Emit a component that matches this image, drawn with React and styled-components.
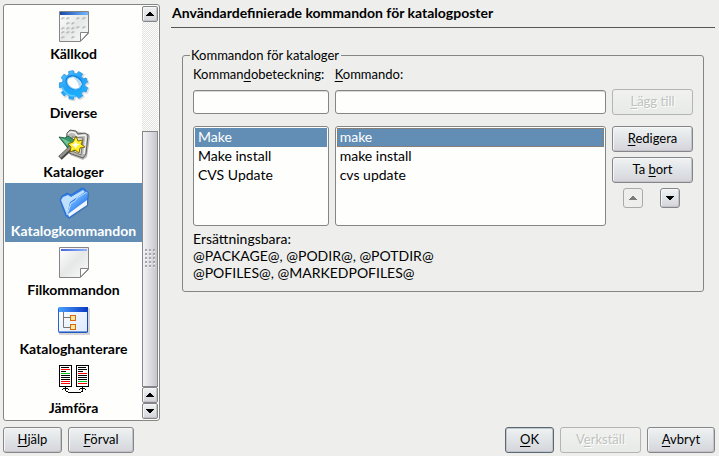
import React, { useState } from "react";
import styled, { createGlobalStyle, css } from "styled-components";

const c = {
  page: "#eeefed",
  line: "#848683",
  select: "#628eb5",
  white: "#fefefd",
};

const GlobalStyle = createGlobalStyle`
  * { box-sizing: border-box; }
  body { margin: 0; background: ${c.page}; color: #000; }
  body, button, input { font-family: Lato, "Noto Sans", sans-serif; font-size: 13px; line-height: 17px; }
  u { text-decoration: underline; text-underline-offset: 2px; text-decoration-skip-ink: none; }
`;

const Dialog = styled.div`
  min-height: 100vh;
  padding: 4px 4px 4px 3px;
  display: flex;
  flex-direction: column;
  gap: 6px;
`;

const Body = styled.div`
  flex: 1;
  display: flex;
  gap: 11px;
`;

const Sidebar = styled.aside`
  flex: 0 0 157px;
  display: flex;
  border: 1px solid ${c.line};
  border-radius: 3px;
  padding: 1px;
  background: ${c.white};
`;

const PageList = styled.nav`
  flex: 1;
  min-width: 0;
`;

const PageButton = styled.button`
  width: 100%;
  height: 59px;
  display: flex;
  flex-direction: column;
  align-items: center;
  gap: 3px;
  padding: 4px 0 2px;
  border: 0;
  font-size: 14px;
  font-weight: 700;
  color: ${(p) => (p.$active ? "#fff" : "#000")};
  background: ${(p) => (p.$active ? c.select : "transparent")};
`;

const ScrollBar = styled.div`
  flex: 0 0 16px;
  display: flex;
  flex-direction: column;
`;

const raised = css`
  border: 1px solid #85868a;
  background: linear-gradient(#f0f2f2, #dfe3e6 55%, #d6d3da);
  box-shadow: inset 1px 1px #f5f6f6, inset -1px -1px #c4c3c9;
`;

const ScrollButton = styled.button`
  ${raised}
  flex: 0 0 16px;
  display: grid;
  place-items: center;
  padding: 0;
  border-radius: 2px;
`;

const Track = styled.div`
  flex: 3 0 0;
  background: conic-gradient(#e3e4e2 25%, #fefefd 0 50%, #e3e4e2 0 75%, #fefefd 0) 0 0 / 2px 2px;
`;

const Thumb = styled.div`
  flex: 7 0 0;
  display: grid;
  place-items: center;
  border: 1px solid #85868a;
  background: linear-gradient(90deg, #f3f3f5, #dddde2 50%, #c8c5cd);
`;

const Main = styled.main`
  flex: 1;
  min-width: 0;
`;

const Title = styled.h1`
  margin: 0;
  padding: 0 0 5px 1px;
  border-bottom: 1px solid #555754;
  font-size: 14px;
  line-height: 18px;
  font-weight: 700;
`;

const Group = styled.fieldset`
  margin: 18px 11px 0;
  padding: 2px 10px 10px;
  border: 1px solid ${c.line};
  border-radius: 3px;
  min-width: 0;
`;

const Legend = styled.legend`
  margin-left: -3px;
  padding: 0 2px 0 1px;
  line-height: 18px;
`;

const Columns = styled.div`
  display: grid;
  grid-template-columns: minmax(0, 1fr) minmax(0, 2fr) 81px;
  column-gap: 6px;
  align-items: ${(p) => p.$align || "stretch"};
  margin-bottom: ${(p) => p.$after || 0}px;
`;

const Label = styled.label`
  white-space: nowrap;
`;

const TextBox = styled.input`
  width: 100%;
  height: 24px;
  padding: 0 5px;
  border: 1px solid ${c.line};
  border-radius: 3px;
  background: ${c.white};
  box-shadow: inset 0 1px #d8d9d7;
`;

const ListBox = styled.ul`
  height: 100px;
  margin: 0;
  padding: 1px;
  list-style: none;
  border: 1px solid ${c.line};
  border-radius: 3px;
  background: ${c.white};
  font-size: 14px;
`;

const Option = styled.li`
  height: 19px;
  padding: 0 3px;
  line-height: 17px;
  color: ${(p) => (p.$active ? "#fff" : "#000")};
  background: ${(p) => (p.$active ? c.select : "transparent")};
  outline: ${(p) => (p.$focused ? "1px dotted #a8733f" : "none")};
  outline-offset: -1px;
`;

const PushButton = styled.button`
  ${raised}
  height: 26px;
  width: ${(p) => (p.$width ? `${p.$width}px` : "100%")};
  padding: 0 0 2px;
  border-radius: 3px;
  color: #000;
  ${(p) => p.$default && css`border-color: #5f676e; box-shadow: inset 0 0 0 1px #bcc7d0;`}
  &:disabled {
    border-color: #b3b5b2;
    background: linear-gradient(#f1f2f0, #e8eae7);
    box-shadow: none;
    color: #c0c2bf;
    text-shadow: 1px 1px #fff;
  }
`;

const Actions = styled.div`
  display: flex;
  flex-direction: column;
  gap: 5px;
`;

const MoveRow = styled.div`
  display: flex;
  justify-content: space-between;
  padding: 0 13px 0 11px;
`;

const MoveButton = styled.button`
  ${raised}
  width: 20px;
  height: 20px;
  display: grid;
  place-items: center;
  padding: 0;
  border-radius: 3px;
  color: #000;
  &:disabled {
    border-color: #a9aba8;
    background: #eeefed;
    box-shadow: none;
    color: #7b7d7a;
  }
`;

const Variables = styled.p`
  margin: 0;
  font-size: 14px;
`;

const Footer = styled.footer`
  display: flex;
  justify-content: space-between;
`;

const ButtonRow = styled.div`
  display: flex;
  gap: 6px;
`;

function Arrow({ down }) {
  return (
    <svg width="8" height="4" viewBox="0 0 8 4" shapeRendering="crispEdges" aria-hidden="true">
      <path fill="currentColor" d={down ? "M0 0h8v1H7v1H6v1H5v1H3V3H2V2H1V1H0z" : "M3 0h2v1h1v1h1v1h1v1H0V3h1V2h1V1h1z"} />
    </svg>
  );
}

function Grip() {
  const dots = [];
  for (let y = 0; y < 5; y++) for (let x = 0; x < 3; x++) dots.push([x * 4, y * 4]);
  return (
    <svg width="11" height="19" viewBox="0 0 11 19" shapeRendering="crispEdges" aria-hidden="true">
      {dots.map(([x, y]) => (
        <g key={`${x}-${y}`}>
          <rect x={x} y={y} width="2" height="2" fill="#a5a5ae" />
          <path d={`M${x + 2} ${y + 1}v2h-1v-1h1z`} fill="#fff" />
        </g>
      ))}
    </svg>
  );
}

function Sheet({ marks }) {
  return (
    <>
      <defs>
        <linearGradient id={marks ? "sheetA" : "sheetB"} x2="1" y2="1">
          <stop stopColor="#fff" /><stop offset=".5" stopColor="#e6e8e8" /><stop offset="1" stopColor="#fafafa" />
        </linearGradient>
        <linearGradient id={marks ? "barA" : "barB"}>
          <stop stopColor={marks ? "#1849a8" : "#4568d8"} /><stop offset="1" stopColor={marks ? "#75b7ff" : "#8fb3ff"} />
        </linearGradient>
      </defs>
      <path d="M1.5 1.500h29v22l-8 8h-21z" fill={`url(#${marks ? "sheetA" : "sheetB"})`} stroke="#858585" />
      <path d={marks ? "M2 2h28v3H2z" : "M3 3h26v2H3z"} fill={`url(#${marks ? "barA" : "barB"})`} />
      {marks &&
        [[5, 8], [10, 8], [20, 8], [26, 8], [10, 13], [15, 13], [20, 17], [26, 17], [5, 18], [10, 18], [15, 18], [5, 22], [10, 22], [15, 22], [5, 27], [15, 27]].map(([x, y]) => (
          <path key={`${x}-${y}`} d={`M${x - 1} ${y + 1.5}v-1.500h2.500`} fill="none" stroke="#a2a5a7" />
        ))}
      <path d="M22.500 31v-8.500h8z" fill="#fff" stroke="#858585" strokeLinejoin="round" />
    </>
  );
}

const gearOutline = (() => {
  const teeth = 9;
  const points = [];
  for (let i = 0; i < teeth; i++) {
    [[-0.31, 11.5], [-0.23, 14.3], [0.23, 14.3], [0.31, 11.5]].forEach(([shift, radius]) => {
      const angle = ((i + shift) / teeth) * Math.PI * 2 - 1.75;
      points.push(`${(15.5 + radius * Math.cos(angle)).toFixed(1)} ${(16 + radius * Math.sin(angle)).toFixed(1)}`);
    });
  }
  return `M${points.join("L")}z`;
})();

function Gear() {
  return (
    <>
      <defs>
        <linearGradient id="gear" x2=".7" y2="1">
          <stop stopColor="#5fcbfd" /><stop offset=".5" stopColor="#22a2f8" /><stop offset="1" stopColor="#18b2ff" />
        </linearGradient>
      </defs>
      <path transform="translate(1 1)" d={gearOutline} fill="#83909b" stroke="#83909b" strokeWidth="2" strokeLinejoin="round" opacity=".3" />
      <path d={gearOutline} fill="url(#gear)" stroke="#379de8" strokeLinejoin="round" />
      <ellipse cx="16" cy="13.500" rx="9" ry="7" transform="rotate(30 16 13.500)" fill="#187cd6" />
      <ellipse cx="16" cy="14" rx="7.500" ry="5.500" transform="rotate(32 16 14)" fill="#fefefd" stroke="#6cc9fb" />
      <path d="M16 9c4 0 8 3 8 7l-3 2c0-3-2-6-5-9z" fill="#b4daf5" />
      <path d="M4 18c2 6 7 9 13 9" fill="none" stroke="#55cbff" strokeWidth="1.500" />
    </>
  );
}

function FolderWand() {
  return (
    <>
      <path d="M11 5l3-3 8 2 9 2 1 3-3 20-4 3-13-5z" fill="#777" opacity=".5" />
      <path d="M9 5l3-3 6 1 2 3 7-1 3 2-2 19-3 4-14-5-3-9z" fill="#b9bab6" stroke="#5c5d5b" />
      <path d="M10 6l3-2 4 1 2 3 8-1 1 2-2 17" fill="none" stroke="#f1f1ed" strokeWidth="1.500" />
      <path d="M14 9l11 1-2 17-9-4z" fill="#deded7" stroke="#777972" />
      <path d="M1 9l6 1 3-2 9 6-2 9-8-4z" fill="#3b9967" stroke="#25664b" />
      <path d="M3 10l5 2 7 4-6 1z" fill="#73c79c" />
      <path d="M2 30L15 18" stroke="#444542" strokeWidth="5" />
      <path d="M2 29L15 17" stroke="#92948f" strokeWidth="2.500" />
      <path d="M18 8l2 5 5-1-2 4 4 3-5 1-1 5-4-3-5 2 1-5-3-3 5-2z" fill="#ffee23" stroke="#81690f" strokeLinejoin="round" />
      <path d="M18 13l1 3 3 0-3 2-1 3-2-3-3-1 3-1z" fill="#fffff0" />
    </>
  );
}

function BlueFolder() {
  return (
    <>
      <defs>
        <linearGradient id="folder" x2=".8" y2="1">
          <stop stopColor="#b9dcff" /><stop offset=".48" stopColor="#5aa5fb" /><stop offset="1" stopColor="#0a55df" />
        </linearGradient>
      </defs>
      <path d="M4 20L11 32 30 19 31 6z" fill="#254e79" opacity=".4" />
      <path d="M2 13L4 9l5-3 4 2L24 1l3 1 1 2 2 1-1 13L11 31 8 29z" fill="#2f7eeb" stroke="#286fd2" />
      <path d="M3 13l2-3 5-2 3 2L25 3l2 2-15 10-3 13z" fill="#c0e0ff" />
      <path d="M9 28l4-12 4-2 2-3L29 5l1 1-1 8-18 13z" fill="url(#folder)" />
      <path d="M9 28l4-12 4-2 2-3L29 5" fill="none" stroke="#bfe0ff" />
      <path d="M10 27L29 13l0 5L11 30z" fill="#f0f5ff" />
    </>
  );
}

function TreeWindow() {
  return (
    <>
      <defs>
        <linearGradient id="title"><stop stopColor="#48a0ff" /><stop offset="1" stopColor="#0b37c1" /></linearGradient>
        <linearGradient id="pane" x2="1" y2="1"><stop stopColor="#fff" /><stop offset="1" stopColor="#dce9ff" /></linearGradient>
      </defs>
      <rect x="1" y="3" width="31" height="27" rx="1" fill="#999" opacity=".4" />
      <rect x=".5" y="2.500" width="29" height="25" rx="1" fill="url(#pane)" stroke="#2864cb" />
      <path d="M1 2h29v5H1z" fill="url(#title)" />
      <path d="M29.500 6v21H1" fill="none" stroke="#164ab7" />
      <path d="M5.500 7v15.500H12M5.500 12.500H12" fill="none" stroke="#777" />
      <rect x="12.500" y="10.500" width="5" height="5" fill="#ffe9a0" stroke="#d96911" />
      <rect x="12.500" y="19.500" width="5" height="5" fill="#ffe9a0" stroke="#d96911" />
    </>
  );
}

function ComparedPage({ x, colors }) {
  return (
    <g>
      <rect x={x} y="1" width="13" height="22" fill="#000" />
      <rect x={x + 1} y="2" width="11" height="20" fill="#fff" />
      {colors.map((color, i) => (
        <rect key={i} x={x + 2} y={3 + i * 2} width={i === 2 ? 5 : i === 0 ? 8 : 9} height="1" fill={color} />
      ))}
    </g>
  );
}

function Compare() {
  const r = "#ff0000", g = "#00c01c", b = "#000";
  return (
    <g shapeRendering="crispEdges">
      <ComparedPage x={1} colors={[b, r, b, g, b, b, b, r, r]} />
      <ComparedPage x={18} colors={[b, b, b, r, b, b, b, g, r]} />
      <path d="M7 23h1v4H7zM5 24h2v1H5zM8 24h2v1H8zM4 25h1v1H4zM10 25h1v1h-1zM8 27h2v1H8zM10 28h13v1H10zM23 27h2v1h-2zM24 23h1v4h-1zM22 24h2v1h-2zM25 24h2v1h-2zM21 25h1v1h-1zM27 25h1v1h-1z" fill="#000" />
    </g>
  );
}

const pages = [
  ["Källkod", () => <Sheet marks />],
  ["Diverse", Gear],
  ["Kataloger", FolderWand],
  ["Katalogkommandon", BlueFolder],
  ["Filkommandon", () => <Sheet />],
  ["Kataloghanterare", TreeWindow],
  ["Jämföra", Compare],
];

const commands = [
  ["Make", "make"],
  ["Make install", "make install"],
  ["CVS Update", "cvs update"],
];

function CommandList({ label, column, selected, onSelect, focused }) {
  return (
    <ListBox role="listbox" aria-label={label} tabIndex={0}>
      {commands.map((row, i) => (
        <Option
          key={row[0]}
          role="option"
          aria-selected={i === selected}
          $active={i === selected}
          $focused={focused && i === selected}
          onClick={() => onSelect(i)}
        >
          {row[column]}
        </Option>
      ))}
    </ListBox>
  );
}

export default function App() {
  const [page, setPage] = useState(3);
  const [selected, setSelected] = useState(0);

  return (
    <>
      <GlobalStyle />
      <Dialog>
        <Body>
          <Sidebar>
            <PageList>
              {pages.map(([name, Icon], i) => (
                <PageButton key={name} type="button" $active={i === page} onClick={() => setPage(i)}>
                  <svg width="32" height="32" viewBox="0 0 32 32" aria-hidden="true"><Icon /></svg>
                  {name}
                </PageButton>
              ))}
            </PageList>
            <ScrollBar>
              <ScrollButton type="button" aria-label="Rulla upp"><Arrow /></ScrollButton>
              <Track />
              <Thumb><Grip /></Thumb>
              <ScrollButton type="button" aria-label="Rulla upp"><Arrow /></ScrollButton>
              <ScrollButton type="button" aria-label="Rulla ned"><Arrow down /></ScrollButton>
            </ScrollBar>
          </Sidebar>

          <Main>
            <Title>Användardefinierade kommandon för katalogposter</Title>
            <Group>
              <Legend>Kommandon för kataloger</Legend>
              <Columns $after={6}>
                <Label htmlFor="name">Komman<u>d</u>obeteckning:</Label>
                <Label htmlFor="command"><u>K</u>ommando:</Label>
              </Columns>
              <Columns $align="center" $after={11}>
                <TextBox id="name" type="text" />
                <TextBox id="command" type="text" />
                <PushButton type="button" disabled><u>L</u>ägg till</PushButton>
              </Columns>
              <Columns $align="start" $after={4}>
                <CommandList label="Kommandobeteckning" column={0} selected={selected} onSelect={setSelected} />
                <CommandList label="Kommando" column={1} selected={selected} onSelect={setSelected} focused />
                <Actions>
                  <PushButton type="button"><u>R</u>edigera</PushButton>
                  <PushButton type="button">Ta <u>b</u>ort</PushButton>
                  <MoveRow>
                    <MoveButton type="button" aria-label="Flytta upp" disabled><Arrow /></MoveButton>
                    <MoveButton type="button" aria-label="Flytta ned"><Arrow down /></MoveButton>
                  </MoveRow>
                </Actions>
              </Columns>
              <Variables>
                Ersättningsbara:<br />
                @PACKAGE@, @PODIR@, @POTDIR@<br />
                @POFILES@, @MARKEDPOFILES@
              </Variables>
            </Group>
          </Main>
        </Body>

        <Footer>
          <ButtonRow>
            <PushButton type="button" $width={59}><u>H</u>jälp</PushButton>
            <PushButton type="button" $width={66}><u>F</u>örval</PushButton>
          </ButtonRow>
          <ButtonRow>
            <PushButton type="button" $width={49} $default><u>O</u>K</PushButton>
            <PushButton type="button" $width={81} disabled>V<u>e</u>rkställ</PushButton>
            <PushButton type="button" $width={68}><u>A</u>vbryt</PushButton>
          </ButtonRow>
        </Footer>
      </Dialog>
    </>
  );
}
